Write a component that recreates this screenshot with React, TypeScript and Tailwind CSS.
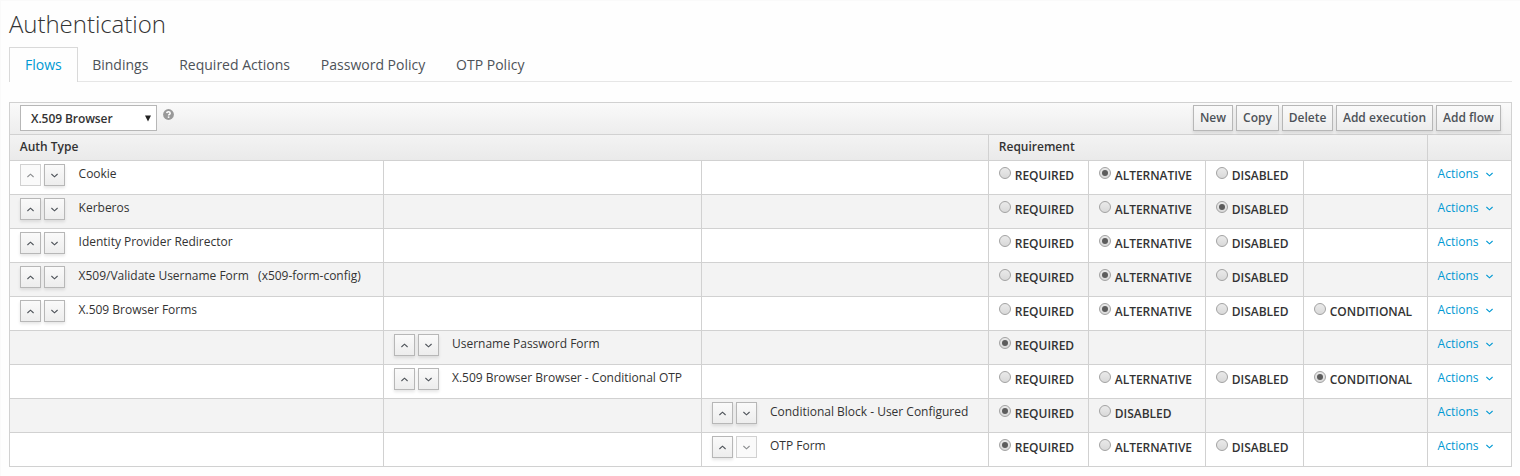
import { ReactNode } from "react";

type Req = "REQUIRED" | "ALTERNATIVE" | "DISABLED" | "CONDITIONAL";

interface Execution {
  name: string;
  level: 0 | 1 | 2;
  choices: Req[];
  selected: Req;
  first?: boolean;
  last?: boolean;
}

const three: Req[] = ["REQUIRED", "ALTERNATIVE", "DISABLED"];
const four: Req[] = [...three, "CONDITIONAL"];

const executions: Execution[] = [
  { name: "Cookie", level: 0, choices: three, selected: "ALTERNATIVE", first: true },
  { name: "Kerberos", level: 0, choices: three, selected: "DISABLED" },
  { name: "Identity Provider Redirector", level: 0, choices: three, selected: "ALTERNATIVE" },
  { name: "X509/Validate Username Form\u00a0\u00a0 (x509-form-config)", level: 0, choices: three, selected: "ALTERNATIVE" },
  { name: "X.509 Browser Forms", level: 0, choices: four, selected: "ALTERNATIVE" },
  { name: "Username Password Form", level: 1, choices: ["REQUIRED"], selected: "REQUIRED" },
  { name: "X.509 Browser Browser - Conditional OTP", level: 1, choices: four, selected: "CONDITIONAL" },
  { name: "Conditional Block - User Configured", level: 2, choices: ["REQUIRED", "DISABLED"], selected: "REQUIRED" },
  { name: "OTP Form", level: 2, choices: three, selected: "REQUIRED", last: true },
];

const tabs = ["Bindings", "Required Actions", "Password Policy", "OTP Policy"];
const toolbar = [
  { label: "New", width: "w-10" },
  { label: "Copy", width: "w-[43px]" },
  { label: "Delete", width: "w-[51px]" },
  { label: "Add execution", width: "w-[97px]" },
  { label: "Add flow", width: "w-[65px]" },
];

function Angle({ up = false }: { up?: boolean }) {
  return (
    <svg width="7" height="5" viewBox="0 0 7 5" fill="none" stroke="currentColor" strokeWidth="1.1">
      <path d={up ? "M0.4 4 3.5 1.2 6.6 4" : "M0.4 1 3.5 3.8 6.6 1"} />
    </svg>
  );
}

function MoveButton({ up, disabled }: { up?: boolean; disabled?: boolean }) {
  return (
    <button
      disabled={disabled}
      className={
        disabled
          ? "flex h-[22px] w-[21px] items-center justify-center border border-[#d1d1d1] bg-[#fafafa] pt-px text-[#8b8d8f]"
          : "flex h-[22px] w-[21px] items-center justify-center border border-[#b7b7b7] bg-linear-to-b from-[#fafafa] to-[#ededed] pt-px text-[#4d5258] shadow-[0_2px_3px_rgba(0,0,0,0.1)]"
      }
    >
      <Angle up={up} />
    </button>
  );
}

function Radio({ label, checked }: { label: string; checked: boolean }) {
  return (
    <label className="flex items-start pt-[6px] pl-[10px]">
      <span className="flex size-3 shrink-0 items-center justify-center rounded-full border border-[#a2a2a2] bg-linear-to-b from-[#eaeaea] to-[#d9d9d9]">
        {checked && <span className="size-1.5 rounded-full bg-[#5c5c5c]" />}
      </span>
      <span className="ml-[3.8px] pt-px text-[12px] leading-4 font-semibold tracking-[-0.03px] whitespace-nowrap">{label}</span>
    </label>
  );
}

function Cell({ children }: { children?: ReactNode }) {
  return <div className="border-r border-[#d1d1d1]">{children}</div>;
}

function ExecutionRow({ item }: { item: Execution }) {
  return (
    <div className="grid h-[34px] grid-cols-[374px_318px_287px_100px_117px_98px_124px_84px] border-b border-[#d1d1d1] odd:bg-white even:bg-[#f3f3f3]">
      {[0, 1, 2].map((level) => (
        <Cell key={level}>
          {item.level === level && (
            <div className="flex items-start pt-[3px] pl-[10px]">
              <div className="flex gap-[3px]">
                <MoveButton up disabled={item.first} />
                <MoveButton disabled={item.last} />
              </div>
              <span className={`${level === 0 ? "ml-[13.6px]" : "ml-[13px]"} text-[12px] leading-5 tracking-[-0.01px] whitespace-nowrap`}>
                {item.name}
              </span>
            </div>
          )}
        </Cell>
      ))}
      {[0, 1, 2, 3].map((i) => (
        <Cell key={i}>
          {item.choices[i] && <Radio label={item.choices[i]} checked={item.selected === item.choices[i]} />}
        </Cell>
      ))}
      <Cell>
        <a className="flex items-center pt-[3px] pl-[9.6px] text-[12px] leading-5 text-[#0099d3]">
          <span className="w-[48.4px]">Actions</span>
          <Angle />
        </a>
      </Cell>
    </div>
  );
}

export default function App() {
  return (
    <div className="h-[476px] overflow-hidden border-t border-l border-[#fafafa] bg-[#fefefe] pr-2 pl-2 font-['Open_Sans',sans-serif] text-[#333333]">
      <h1 className="h-[46px] pt-[7px] text-[24px] leading-8 font-light tracking-[-0.04px] whitespace-nowrap">Authentication</h1>
      <nav className="flex h-[35px] border-b border-[#e6e6e6] text-[14px] leading-[34px] text-[#4d5258]">
        <a className="-mb-px h-[35px] w-[69px] border border-b-0 border-[#d9d9d9] bg-[#fefefe] pl-[15px] text-[#0099d3]">Flows</a>
        <div className="ml-[14.2px] flex gap-[30.9px] pt-px">
          {tabs.map((tab) => (
            <a key={tab} className="whitespace-nowrap">{tab}</a>
          ))}
        </div>
      </nav>

      <section className="mt-5 border-t border-l border-[#d1d1d1]">
        <div className="flex h-8 items-start border-r border-b border-[#d1d1d1] bg-linear-to-b from-[#fafafa] to-[#ededed] px-[10px] pt-[2px]">
          <button className="flex h-[26px] w-[137px] items-center justify-between border border-[#b7b7b7] bg-white pr-1 pl-[10px] text-[12px] font-semibold">
            <span className="pt-[2px] tracking-[-0.08px]">X.509 Browser</span>
            <svg width="8" height="7" viewBox="0 0 8 7" fill="#222222">
              <path d="M1 0.5H7L4 6.5Z" />
            </svg>
          </button>
          <svg className="mt-1 ml-[6px]" width="11" height="11" viewBox="0 0 11 11">
            <circle cx="5.5" cy="5.5" r="5.4" fill="#999999" />
            <path d="M3.7 4.2C3.9 2.4 7.2 2.4 7.2 4.3C7.2 5.4 5.6 5.4 5.6 6.6" fill="none" stroke="#ffffff" strokeWidth="1.5" />
            <path d="M4.8 7.4H6.4V8.9H4.8Z" fill="#ffffff" />
          </svg>
          <div className="ml-auto flex gap-[3px]">
            {toolbar.map(({ label, width }) => (
              <button
                key={label}
                className={`${width} flex h-[26px] justify-center border border-[#b7b7b7] bg-linear-to-b from-[#fafafa] to-[#ededed] text-[12px] leading-[23px] font-semibold whitespace-nowrap text-[#4d5258] shadow-[0_2px_3px_rgba(0,0,0,0.1)]`}
              >
                {label}
              </button>
            ))}
          </div>
        </div>
        <div className="grid h-[26px] grid-cols-[979px_439px_84px] border-b border-[#d1d1d1] bg-linear-to-b from-[#f3f3f3] to-[#eaeaea] text-[12px] leading-[23px] font-semibold">
          <div className="border-r border-[#d1d1d1] pl-[9.8px]">Auth Type</div>
          <div className="border-r border-[#d1d1d1] pl-[9.8px]">Requirement</div>
          <div className="border-r border-[#d1d1d1]" />
        </div>
        <div>
          {executions.map((item) => (
            <ExecutionRow key={item.name} item={item} />
          ))}
        </div>
      </section>
    </div>
  );
}
